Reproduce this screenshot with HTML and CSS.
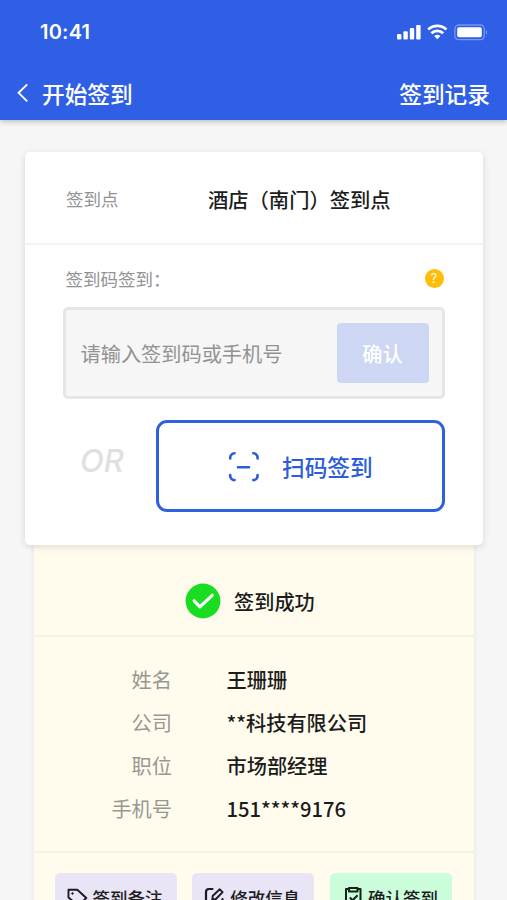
FILE: index.html
```
<!DOCTYPE html>
<html lang="zh-CN">
<head>
<meta charset="utf-8">
<title>开始签到</title>
<link rel="stylesheet" href="styles.css">
</head>
<body>
<div class="screen">
  <header class="header">
    <div class="status">
      <span class="time">10:41</span>
      <svg class="status-icons" width="90" height="18" viewBox="0 0 90 18">
        <g fill="#fff">
          <rect x="0" y="10" width="4.4" height="5.5" rx="1"/>
          <rect x="6.4" y="7.3" width="4.4" height="8.2" rx="1"/>
          <rect x="12.8" y="4" width="4.4" height="11.5" rx="1"/>
          <rect x="19.2" y="1" width="4.4" height="14.5" rx="1"/>
          <rect x="60.2" y="3.3" width="24.6" height="10" rx="1.8"/>
          <path d="M89 6v4.4c1.8-.7 1.8-3.7 0-4.4z" opacity=".4"/>
          <path d="M40.3 15.2l3.1-3.1a4.5 4.5 0 0 0-6.2 0z"/>
        </g>
        <rect x="57.9" y="1" width="29.4" height="14.6" rx="3.8" fill="none" stroke="#fff" stroke-opacity=".35" stroke-width="1.3"/>
        <path d="M31.2 5.6a13.2 13.2 0 0 1 18.2 0M34.4 9.2a8.5 8.5 0 0 1 11.8 0" fill="none" stroke="#fff" stroke-width="2.8"/>
      </svg>
    </div>
    <nav class="nav">
      <svg class="back" width="12" height="20" viewBox="0 0 12 20"><path d="M10.2 1.400L1.600 9.800l8.600 8.600" fill="none" stroke="#fff" stroke-width="1.900"/></svg>
      <h1 class="title">开始签到</h1>
      <span class="records">签到记录</span>
    </nav>
  </header>

  <main class="content">
    <section class="card">
      <div class="point">
        <span class="point-label">签到点</span>
        <span class="point-name">酒店（南门）签到点</span>
      </div>
      <div class="form">
        <div class="form-head">
          <span class="form-label">签到码签到：</span>
          <span class="help">?</span>
        </div>
        <div class="field">
          <span class="placeholder">请输入签到码或手机号</span>
          <span class="confirm">确认</span>
        </div>
        <div class="scan-row">
          <span class="or">OR</span>
          <div class="scan">
            <svg class="scan-icon" width="32" height="32" viewBox="0 0 32 32"><path d="M2.200 8.400V7.600a4.300 4.300 0 0 1 4.300-4.300M25.300 3.300a4.300 4.300 0 0 1 4.300 4.300v.8M29.600 25v.8a4.300 4.300 0 0 1-4.300 4.300M6.500 30.100a4.300 4.300 0 0 1-4.300-4.300V25M10 17.200h11" fill="none" stroke="#2c5cdc" stroke-width="2.600" stroke-linecap="round"/></svg>
            <span>扫码签到</span>
          </div>
        </div>
      </div>
    </section>

    <section class="result">
      <div class="success">
        <svg width="36" height="36" viewBox="0 0 36 36"><circle cx="18" cy="18" r="17.400" fill="#18dd21"/><path d="M9.200 17.800l5.700 6L27.200 12.300" fill="none" stroke="#fff" stroke-width="3.200" stroke-linecap="round" stroke-linejoin="round"/></svg>
        <span>签到成功</span>
      </div>
      <dl class="info">
        <dt>姓名</dt><dd>王珊珊</dd>
        <dt>公司</dt><dd>**科技有限公司</dd>
        <dt>职位</dt><dd>市场部经理</dd>
        <dt>手机号</dt><dd>151****9176</dd>
      </dl>
      <div class="actions">
        <div class="action">
          <svg width="21" height="21" viewBox="0 0 21 21" fill="none" stroke="#1d1a26" stroke-width="1.900" stroke-linejoin="round"><path d="M1.500 3.700h8.800l9 8.300-8 7.500L1.500 11.500z"/><circle cx="5.500" cy="7.500" r=".8" fill="#1d1a26" stroke-width="1"/></svg>
          <span>签到备注</span>
        </div>
        <div class="action">
          <svg width="21" height="21" viewBox="0 0 21 21" fill="none" stroke="#1d1a26" stroke-width="2.200" stroke-linecap="round" stroke-linejoin="round"><path d="M8.500 3H5a3 3 0 0 0-3 3v10.500a3 3 0 0 0 3 3h10.500a3 3 0 0 0 3-3V13"/><path d="M8.200 14l.6-4.200 7-6.500 2.800 2.800-6.700 6.900z" stroke-width="1.900"/></svg>
          <span>修改信息</span>
        </div>
        <div class="action action-confirm">
          <svg width="21" height="21" viewBox="0 0 21 21" fill="none" stroke="#132418" stroke-width="2" stroke-linejoin="round"><path d="M6 3H3v16.500h14.500V3h-3M6 2h8.500v3.600H6zM6.800 11.500l2.800 2.800 5-5"/></svg>
          <span>确认签到</span>
        </div>
      </div>
    </section>
  </main>
</div>
</body>
</html>
```
FILE: styles.css
```
* { box-sizing: border-box; }

body {
  margin: 0;
  background: #f6f6f6;
  font-family: "Noto Sans CJK SC", sans-serif;
  font-weight: 400;
  color: #1c1c1c;
}

.screen {
  width: 507px;
  height: 900px;
  overflow: hidden;
}

.header {
  height: 119.500px;
  background: #2e5fe5;
  color: #fff;
  box-shadow: 0 2px 5px rgba(0, 0, 0, 0.22);
}

.status {
  display: flex;
  justify-content: space-between;
  align-items: center;
  height: 64px;
  padding: 0 17px 0 40px;
}

.time {
  font: 600 20px/24px Inter, sans-serif;
  letter-spacing: 0.200px;
}

.status-icons { margin-top: 1px; margin-right: 3px; }

.nav {
  display: flex;
  align-items: center;
  height: 58px;
  padding: 1px 17px 0;
  font-size: 22.700px;
  font-weight: 500;
  line-height: 34px;
}

.back { margin-top: -1px; }

.title {
  margin: 0 0 0 13px;
  font-size: inherit;
  font-weight: inherit;
}

.records { margin-left: auto; }

.content { padding-top: 32.500px; }

.card {
  position: relative;
  width: 458px;
  height: 393px;
  margin-left: 25px;
  border-radius: 5px;
  background: #fff;
  box-shadow: 0 2px 7px rgba(0, 0, 0, 0.13);
}

.point {
  display: flex;
  align-items: center;
  height: 93px;
  padding: 3px 41px 0;
  border-bottom: 2px solid #f3f3f3;
}

.point-label {
  width: 142px;
  margin-top: -1px;
  color: #929295;
  font-size: 17.500px;
}

.point-name { font-size: 20.300px; font-weight: 500; }

.form { padding: 20px 38px 0; }

.form-head {
  display: flex;
  align-items: center;
  justify-content: space-between;
  height: 26px;
  padding: 0 1.500px 0 2.500px;
}

.form-label { color: #929295; font-size: 17.500px; }

.help {
  width: 19px;
  height: 19px;
  border-radius: 50%;
  background: #ffbd08;
  color: #fff;
  font: 400 12.500px/19px Inter, sans-serif;
  text-align: center;
}

.field {
  display: flex;
  align-items: center;
  justify-content: space-between;
  height: 92px;
  margin-top: 16px;
  padding: 0 13.500px 0 14.500px;
  border: 3px solid #e6e6e8;
  border-radius: 5px;
  background: #f6f6f6;
}

.placeholder { color: #929292; font-size: 20.200px; }

.confirm {
  width: 92px;
  height: 60px;
  border-radius: 4px;
  background: #cdd7f3;
  color: #fff;
  font-size: 20.200px;
  font-weight: 500;
  line-height: 61px;
  text-align: center;
}

.scan-row {
  display: flex;
  justify-content: space-between;
  align-items: center;
  margin-top: 21px;
  padding-left: 17px;
}

.or {
  margin-top: -10px;
  color: #e0e0e3;
  font: italic 500 31px/38px Inter, sans-serif;
}

.scan {
  display: flex;
  align-items: center;
  width: 289px;
  height: 92px;
  padding-left: 69px;
  border: 3px solid #2f60dd;
  border-radius: 11px;
  color: #2c5cdc;
  font-size: 22.700px;
  font-weight: 500;
}

.scan-icon { margin-right: 22px; }

.result {
  width: 440px;
  margin-left: 33.500px;
  background: #fffcee;
  box-shadow: 0 0 5px rgba(0, 0, 0, 0.08);
}

.success {
  display: flex;
  align-items: center;
  height: 91.500px;
  padding: 23px 0 0 151.500px;
  gap: 13px;
  border-bottom: 2px solid #f5f3e8;
  font-size: 20.200px;
  font-weight: 500;
}

.info {
  display: grid;
  grid-template-columns: 138.500px 1fr;
  grid-auto-rows: 43.200px;
  column-gap: 54.500px;
  height: 216px;
  margin: 0;
  padding-top: 21px;
  border-bottom: 2px solid #f5f3e8;
  font-size: 20.200px;
  line-height: 43px;
}

.info dt { color: #979792; text-align: right; }

.info dd { margin: 0; font-weight: 500; }

.actions {
  display: grid;
  grid-template-columns: repeat(3, 122px);
  column-gap: 15.800px;
  padding: 20.500px 0 20px 21px;
}

.action {
  display: flex;
  align-items: center;
  height: 48px;
  padding-left: 12px;
  gap: 5px;
  border-radius: 5px;
  background: #e9e5f6;
  font-size: 17.500px;
  font-weight: 500;
}

.action svg { margin-top: -2px; }

.action-confirm { background: #cbfddb; padding-left: 13px; gap: 4px; }
```
